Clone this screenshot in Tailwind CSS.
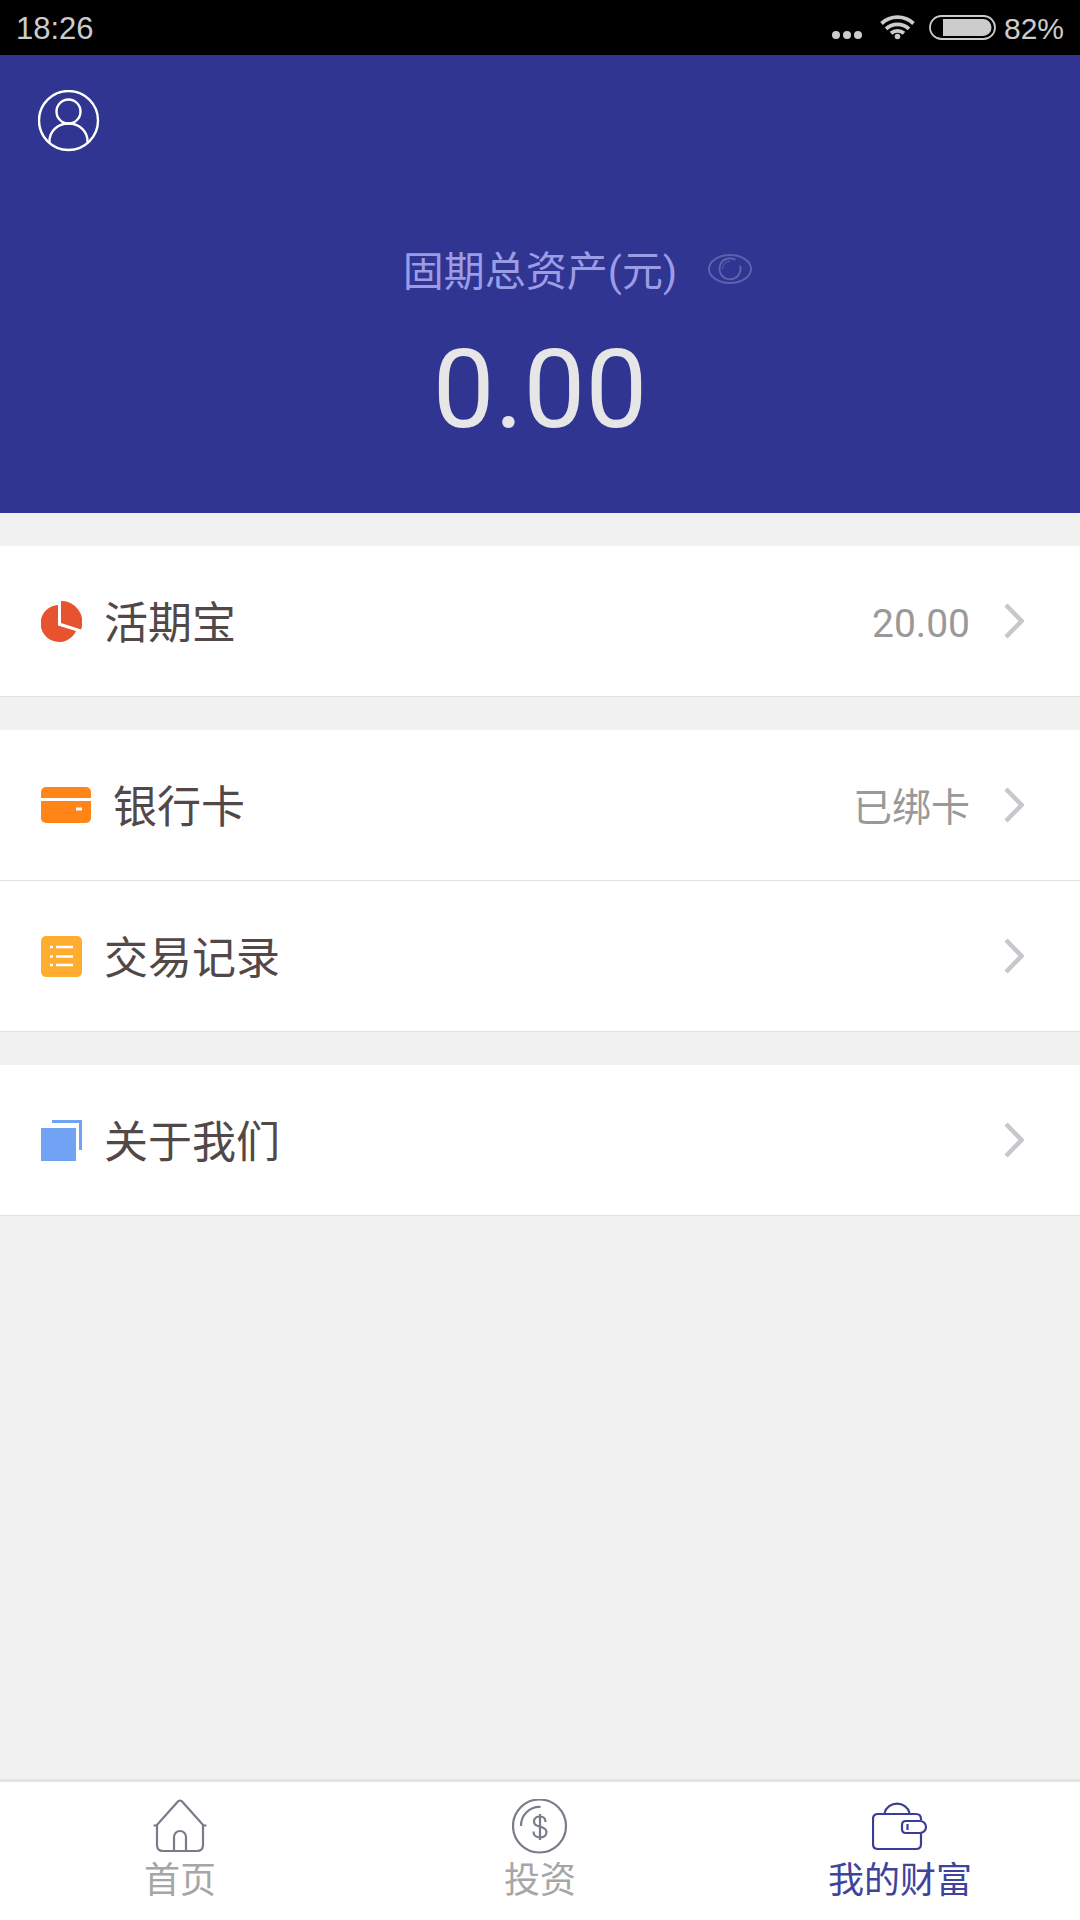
<!DOCTYPE html>
<html lang="zh-CN">
<head>
    <meta charset="UTF-8">
    <meta name="viewport" content="width=device-width, initial-scale=1.0">
    <title>我的财富</title>
    <script src="https://cdn.jsdelivr.net/npm/@tailwindcss/browser@4"></script>
</head>
<body class="bg-[#f1f1f1] min-h-screen flex flex-col font-['Roboto','Noto_Sans_CJK_SC',sans-serif]">
    <!-- Status bar -->
    <div class="h-[55px] shrink-0 bg-black text-[#cccccc] px-4 pt-[2px] flex items-center justify-between font-['Liberation_Sans',sans-serif]">
        <span class="text-[31px] leading-8">18:26</span>
        <div class="flex items-center">
            <svg class="w-8 h-8 mr-4" viewBox="0 0 32 32" fill="#cccccc">
                <circle cx="4" cy="22" r="4"/>
                <circle cx="15" cy="22" r="4"/>
                <circle cx="26" cy="22" r="4"/>
            </svg>
            <svg class="w-9 h-8 mr-3" viewBox="0 0 36 32" fill="none" stroke="#cccccc" stroke-width="3.800">
                <path d="M1.500 10.500a23.500 23.500 0 0 1 32 0"/>
                <path d="M6 15.800a17 17 0 0 1 23 0"/>
                <path d="M11 20.300a10 10 0 0 1 13 0"/>
                <circle cx="17.500" cy="23.500" r="2.800" fill="#cccccc" stroke="none"/>
            </svg>
            <svg class="w-[68px] h-8 mr-2" viewBox="0 0 68 32">
                <rect x="2" y="3" width="65" height="23" rx="11.500" fill="none" stroke="#cccccc" stroke-width="1.800"/>
                <path d="M15 6h40a8.500 8.500 0 0 1 0 17h-40z" fill="#cccccc"/>
            </svg>
            <span class="text-[30px] leading-8">82%</span>
        </div>
    </div>

    <!-- Total assets -->
    <header class="bg-[#2f3590] pt-[35px] pb-[63px] flex flex-col">
        <button type="button" aria-label="个人中心" class="ml-[38px] self-start">
            <svg class="w-[62px] h-[62px]" viewBox="0 0 62 62" fill="none" stroke="#ffffff" stroke-width="2.400">
                <circle cx="30.500" cy="30.500" r="29.500"/>
                <circle cx="30.500" cy="21.500" r="12"/>
                <path d="M11.500 52C11 41.500 19.500 33.500 30.500 33.500S50 41.500 49.500 52"/>
            </svg>
        </button>
        <div class="mt-[90px] grid grid-cols-[1fr_auto_1fr] items-center">
            <h1 class="col-start-2 text-[41px] leading-[60px] text-[#9c9ce6]">固期总资产(元)</h1>
            <button type="button" aria-label="隐藏金额" class="ml-[31px] mb-[6px] justify-self-start">
                <svg class="w-[44px] h-[32px]" viewBox="0 0 44 32" fill="none" stroke="#5c62ab" stroke-width="2">
                    <ellipse cx="22" cy="16" rx="21" ry="14"/>
                    <path d="M32 12.500A10.500 10.500 0 1 1 27.500 6.800"/>
                    <path d="M14.500 16a7.500 8.500 0 0 1 8-8" stroke-width="1"/>
                </svg>
            </button>
        </div>
        <p class="mt-[28px] text-center text-[110px] leading-[120px] text-[#e6e6e6]">0.00</p>
    </header>

    <!-- Menu -->
    <main class="grow pt-[33px] flex flex-col gap-[33px] text-[44px] text-[#524848]">
        <section class="bg-white">
            <a href="#" class="h-[151px] border-b border-[#e1e1e1] pl-[41px] pr-[56px] flex items-center">
                <svg class="w-[41px] h-[41px] mr-[22px]" viewBox="0 0 41 41" fill="#e8532f">
                    <path d="M17 4v20.500l18 5.500A18.500 18.500 0 1 1 17 4z"/>
                    <path d="M20 0A21 21 0 0 1 40 28.500L20 22z"/>
                </svg>
                <span class="grow pt-[6px]">活期宝</span>
                <span class="pt-[6px] text-[39px] text-[#999999]">20.00</span>
                <svg class="w-5 h-9 ml-[34px]" viewBox="0 0 20 36" fill="none" stroke="#c7c7cc" stroke-width="4.500"><path d="M2 2l15.500 16L2 34"/></svg>
            </a>
        </section>
        <section class="bg-white">
            <a href="#" class="h-[151px] border-b border-[#e1e1e1] pl-[41px] pr-[56px] flex items-center">
                <svg class="w-[50px] h-[36px] mr-[22px]" viewBox="0 0 50 36" fill="#ff8519">
                    <path d="M5 0h40a5 5 0 0 1 5 5v6H0V5a5 5 0 0 1 5-5z"/>
                    <path d="M0 14h50v17a5 5 0 0 1-5 5H5a5 5 0 0 1-5-5z"/>
                    <rect x="35" y="20.500" width="6" height="3" fill="#ffffff"/>
                </svg>
                <span class="grow pt-[6px]">银行卡</span>
                <span class="pt-[6px] text-[39px] text-[#999999]">已绑卡</span>
                <svg class="w-5 h-9 ml-[34px]" viewBox="0 0 20 36" fill="none" stroke="#c7c7cc" stroke-width="4.500"><path d="M2 2l15.500 16L2 34"/></svg>
            </a>
            <a href="#" class="h-[151px] border-b border-[#e1e1e1] pl-[41px] pr-[56px] flex items-center">
                <svg class="w-[41px] h-[41px] mr-[22px]" viewBox="0 0 41 41">
                    <rect width="41" height="41" rx="5" fill="#ffad2f"/>
                    <path d="M9 11h3M15 11h17M9 20.500h3M15 20.500h17M9 29h3M15 29h17" stroke="#ffffff" stroke-width="2.600"/>
                </svg>
                <span class="grow pt-[6px]">交易记录</span>
                <svg class="w-5 h-9 ml-[34px]" viewBox="0 0 20 36" fill="none" stroke="#c7c7cc" stroke-width="4.500"><path d="M2 2l15.500 16L2 34"/></svg>
            </a>
        </section>
        <section class="bg-white">
            <a href="#" class="h-[151px] border-b border-[#e1e1e1] pl-[41px] pr-[56px] flex items-center">
                <svg class="w-[41px] h-[41px] mr-[22px]" viewBox="0 0 41 41" fill="#70a3f3">
                    <rect y="8" width="35" height="33"/>
                    <path d="M11 0h30v30h-3V3H11z"/>
                </svg>
                <span class="grow pt-[6px]">关于我们</span>
                <svg class="w-5 h-9 ml-[34px]" viewBox="0 0 20 36" fill="none" stroke="#c7c7cc" stroke-width="4.500"><path d="M2 2l15.500 16L2 34"/></svg>
            </a>
        </section>
    </main>

    <!-- Tab bar -->
    <nav class="h-[141px] shrink-0 bg-white border-t-3 border-[#e3e3e3] pt-[17px] grid grid-cols-3 text-[36px] leading-[48px] text-[#a6a6a6]">
        <a href="#" class="flex flex-col items-center gap-[2px]">
            <svg class="w-[56px] h-[56px]" viewBox="0 0 56 56" fill="none" stroke="#787c8a" stroke-width="2.200">
                <path d="M1.500 26.500h3L25 3.500Q28-.500 31 3.500l20.500 23h3"/>
                <path d="M5 25v21q0 6 6 6h34q6 0 6-6V25"/>
                <path d="M22 52V38a6 6 0 0 1 12 0v14"/>
            </svg>
            <span>首页</span>
        </a>
        <a href="#" class="flex flex-col items-center gap-[2px]">
            <svg class="w-[56px] h-[56px]" viewBox="0 0 56 56" fill="none" stroke="#787c8a" stroke-width="2.200">
                <circle cx="27.500" cy="27" r="26.500"/>
                <path d="M9 27A18.500 18.500 0 0 1 28.500 8"/>
                <path d="M33.500 23c0-4-2.500-5.500-5.500-5.500s-6 1.500-6 5 2.500 4 6 5 6.500 2 6.500 5.500-3 5.500-6.500 5.500-6.500-2-6.500-6M28 15v26"/>
            </svg>
            <span>投资</span>
        </a>
        <a href="#" aria-current="page" class="flex flex-col items-center gap-[2px] text-[#3f4399]">
            <svg class="w-[56px] h-[56px]" viewBox="0 0 56 56" fill="none" stroke="#3a3d98" stroke-width="2.200">
                <path d="M12.500 14a13 13 0 0 1 25 0"/>
                <path d="M49 21V20q0-5-5-5H6q-5 0-5 5v25q0 5 5 5h38q5 0 5-5V34.500"/>
                <path d="M34 22h14a6 6 0 0 1 0 12H34q-4 0-4-4v-4q0-4 4-4zM35.500 25v6"/>
            </svg>
            <span>我的财富</span>
        </a>
    </nav>
</body>
</html>
